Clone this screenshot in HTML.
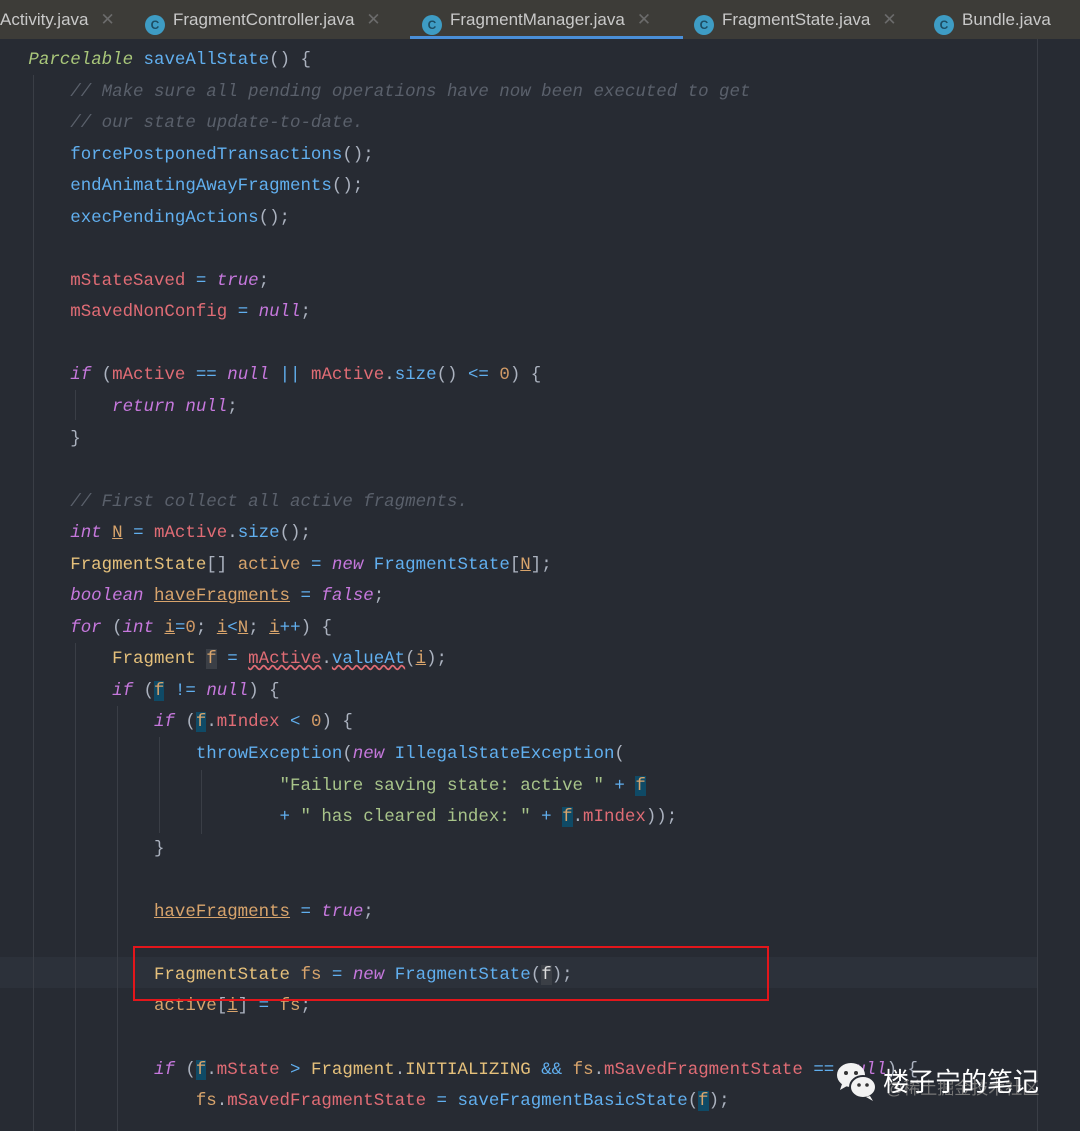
<!DOCTYPE html>
<html><head><meta charset="utf-8"><style>
*{margin:0;padding:0;box-sizing:border-box}
body{width:1080px;height:1131px;background:#272b33;overflow:hidden;position:relative;font-family:"Liberation Mono",monospace}
.tabs{position:absolute;left:0;top:0;width:1080px;height:39px;background:#3d3c38;font-family:"Liberation Sans",sans-serif;font-size:17px;color:#c9c9c9}
.tab{position:absolute;top:0;height:39px;line-height:39px;white-space:nowrap}
.ic{display:inline-block;width:20px;height:20px;border-radius:50%;background:#3e9cc4;vertical-align:-4px;margin-right:8px;color:#1d4d63;font-size:12px;line-height:20px;text-align:center;font-weight:bold}
.x{color:#6b6b6b;margin-left:12px}
.act{position:absolute;left:410px;top:36px;width:273px;height:3px;background:#4a8fd8}
.code{position:absolute;left:-3px;top:45px;font-size:17.45px;line-height:31.55px;color:#abb2bf}
.l{height:31.55px;white-space:pre}
.k{color:#c678dd;font-style:italic}
.c{color:#5a606b;font-style:italic}
.m{color:#61afef}
.f{color:#e06c75}
.t{color:#e5c07b}
.v{color:#d8a46c}
.s{color:#a8c48a}
.n{color:#d19a66}
.o{color:#61afef}
.u{text-decoration:underline}
.hl{background:#0f4a66}
.g{position:absolute;width:1px;background:#3a3e46}
</style></head><body>
<div class="tabs">
<div class="tab" style="left:0">Activity.java<span class="x">✕</span></div>
<div class="tab" style="left:145px"><span class="ic">C</span>FragmentController.java<span class="x">✕</span></div>
<div class="tab" style="left:422px"><span class="ic">C</span>FragmentManager.java<span class="x">✕</span></div>
<div class="tab" style="left:694px"><span class="ic">C</span>FragmentState.java<span class="x">✕</span></div>
<div class="tab" style="left:934px"><span class="ic">C</span>Bundle.java</div>
<div class="act"></div>
</div>
<div style="position:absolute;left:1037px;top:39px;width:1px;height:1092px;background:#3a3e46"></div>
<div style="position:absolute;left:0;top:957px;width:1037px;height:31px;background:#2c313a"></div>
<div class="g" style="left:33px;top:75px;height:1056px"></div>
<div class="g" style="left:75px;top:390px;height:30px"></div>
<div class="g" style="left:75px;top:643px;height:488px"></div>
<div class="g" style="left:117px;top:706px;height:425px"></div>
<div class="g" style="left:159px;top:737px;height:96px"></div>
<div class="g" style="left:201px;top:770px;height:64px"></div>
<div class="code"><div class="l">   <span style="color:#a9c77a;font-style:italic">Parcelable</span> <span class="m">saveAllState</span>() {</div><div class="l">       <span class="c">// Make sure all pending operations have now been executed to get</span></div><div class="l">       <span class="c">// our state update-to-date.</span></div><div class="l">       <span class="m">forcePostponedTransactions</span>();</div><div class="l">       <span class="m">endAnimatingAwayFragments</span>();</div><div class="l">       <span class="m">execPendingActions</span>();</div><div class="l"> </div><div class="l">       <span class="f">mStateSaved</span> <span class="o">=</span> <span class="k">true</span>;</div><div class="l">       <span class="f">mSavedNonConfig</span> <span class="o">=</span> <span class="k">null</span>;</div><div class="l"> </div><div class="l">       <span class="k">if</span> (<span class="f">mActive</span> <span class="o">==</span> <span class="k">null</span> <span class="o">||</span> <span class="f">mActive</span>.<span class="m">size</span>() <span class="o">&lt;=</span> <span class="n">0</span>) {</div><div class="l">           <span class="k">return</span> <span class="k">null</span>;</div><div class="l">       }</div><div class="l"> </div><div class="l">       <span class="c">// First collect all active fragments.</span></div><div class="l">       <span class="k">int</span> <span class="v u">N</span> <span class="o">=</span> <span class="f">mActive</span>.<span class="m">size</span>();</div><div class="l">       <span class="t">FragmentState</span>[] <span class="v">active</span> <span class="o">=</span> <span class="k">new</span> <span class="m">FragmentState</span>[<span class="v u">N</span>];</div><div class="l">       <span class="k">boolean</span> <span class="v u">haveFragments</span> <span class="o">=</span> <span class="k">false</span>;</div><div class="l">       <span class="k">for</span> (<span class="k">int</span> <span class="v u">i</span><span class="o">=</span><span class="n">0</span>; <span class="v u">i</span><span class="o">&lt;</span><span class="v u">N</span>; <span class="v u">i</span><span class="o">++</span>) {</div><div class="l">           <span class="t">Fragment</span> <span class="v" style="background:#3b3f46">f</span> <span class="o">=</span> <span class="f" style="text-decoration:underline wavy #e06c75">mActive</span>.<span class="m" style="text-decoration:underline wavy #e06c75">valueAt</span>(<span class="v u">i</span>);</div><div class="l">           <span class="k">if</span> (<span class="v hl">f</span> <span class="o">!=</span> <span class="k">null</span>) {</div><div class="l">               <span class="k">if</span> (<span class="v hl">f</span>.<span class="f">mIndex</span> <span class="o">&lt;</span> <span class="n">0</span>) {</div><div class="l">                   <span class="m">throwException</span>(<span class="k">new</span> <span class="m">IllegalStateException</span>(</div><div class="l">                           <span class="s">"Failure saving state: active "</span> <span class="o">+</span> <span class="v hl">f</span></div><div class="l">                           <span class="o">+</span> <span class="s">" has cleared index: "</span> <span class="o">+</span> <span class="v hl">f</span>.<span class="f">mIndex</span>));</div><div class="l">               }</div><div class="l"> </div><div class="l">               <span class="v u">haveFragments</span> <span class="o">=</span> <span class="k">true</span>;</div><div class="l"> </div><div class="l">               <span class="t">FragmentState</span> <span class="v">fs</span> <span class="o">=</span> <span class="k">new</span> <span class="m">FragmentState</span>(<span style="color:#ddd;background:#3b3f46">f</span>);</div><div class="l">               <span class="v">active</span>[<span class="v u">i</span>] <span class="o">=</span> <span class="v">fs</span>;</div><div class="l"> </div><div class="l">               <span class="k">if</span> (<span class="v hl">f</span>.<span class="f">mState</span> <span class="o">&gt;</span> <span class="t">Fragment</span>.<span class="t">INITIALIZING</span> <span class="o">&amp;&amp;</span> <span class="v">fs</span>.<span class="f">mSavedFragmentState</span> <span class="o">==</span> <span class="k">null</span>) {</div><div class="l">                   <span class="v">fs</span>.<span class="f">mSavedFragmentState</span> <span class="o">=</span> <span class="m">saveFragmentBasicState</span>(<span class="v hl">f</span>);</div></div>
<div style="position:absolute;left:133px;top:946px;width:636px;height:55px;border:2px solid #e3161b"></div>
<div style="position:absolute;left:886px;top:1074px;font-family:'Liberation Sans','Noto Sans CJK SC',sans-serif;font-size:17px;color:#777">@稀土掘金技术社区</div>
<svg style="position:absolute;left:834px;top:1060px" width="46" height="42" viewBox="0 0 46 42">
<ellipse cx="17" cy="15" rx="14" ry="12" fill="#f2f2f2"/><path d="M8 24 L6 30 L13 26Z" fill="#f2f2f2"/>
<ellipse cx="29" cy="27" rx="13" ry="11" fill="#f2f2f2" stroke="#272b33" stroke-width="2"/><path d="M36 36 L39 41 L32 37Z" fill="#f2f2f2"/>
<circle cx="12" cy="13" r="2" fill="#333"/><circle cx="22" cy="13" r="2" fill="#333"/><circle cx="25" cy="25" r="1.8" fill="#333"/><circle cx="33" cy="25" r="1.8" fill="#333"/></svg>
<div style="position:absolute;left:883px;top:1063px;font-family:'Noto Sans CJK SC',sans-serif;font-size:26px;color:#fff;line-height:36px">楼子宁的笔记</div>
</body></html>
